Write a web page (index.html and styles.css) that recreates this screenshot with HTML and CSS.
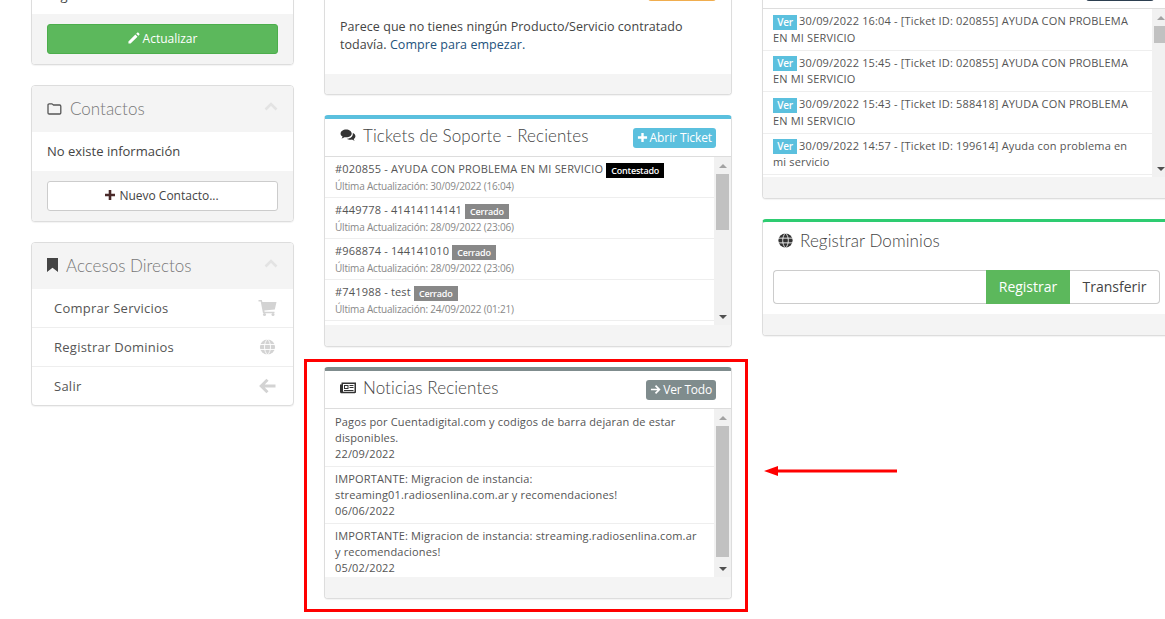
FILE: index.html
```html
<!DOCTYPE html>
<html lang="es">
<head>
	<meta charset="UTF-8">
	<title>Panel de cliente</title>
	<link rel="stylesheet" href="styles.css">
</head>
<body>
	<div class="page">
		<div class="col-left">
			<div class="panel">
				<div class="info-body">Argentina</div>
				<div class="foot foot-btn">
					<a class="btn btn-green">
						<svg class="ico" viewBox="0 0 14 14"><path fill="#fff" d="M3 13.5H0.5V11L8.6 2.9l2.5 2.5zM9.6 1.9l1-1c.5-.5 1.1-.5 1.6 0l.9.9c.5.5.5 1.1 0 1.6l-1 1z"/></svg>
						Actualizar
					</a>
				</div>
			</div>
			<div class="panel">
				<div class="side-head">
					<svg class="ico-title" viewBox="0 0 15 13"><path fill="none" stroke="#555" stroke-width="1.3" d="M1 11V3c0-.8.4-1.2 1.2-1.2h2.6c.7 0 1 .9 1.6 1.2h6.2c.8 0 1.2.4 1.2 1.2V11c0 .7-.4 1-1.2 1H2.2C1.400 12 1 11.700 1 11z"/></svg>
					<span>Contactos</span>
					<svg class="chev" viewBox="0 0 14 9"><path fill="none" stroke="#e3e3e3" stroke-width="2.600" d="M1.500 7.500 7 2l5.500 5.500"/></svg>
				</div>
				<div class="side-text">No existe información</div>
				<div class="foot foot-btn">
					<a class="btn btn-white">
						<svg class="ico" viewBox="0 0 12 12"><path fill="#4a2a2a" d="M4.700 1h2.600v3.700H11v2.600H7.300V11H4.700V7.300H1V4.700h3.700z"/></svg>
						Nuevo Contacto...
					</a>
				</div>
			</div>
			<div class="panel">
				<div class="side-head">
					<svg class="ico-mark" viewBox="0 0 11 14"><path fill="#444" d="M0 0h11v14L5.500 9.800 0 14z"/></svg>
					<span>Accesos Directos</span>
					<svg class="chev" viewBox="0 0 14 9"><path fill="none" stroke="#e3e3e3" stroke-width="2.600" d="M1.500 7.500 7 2l5.500 5.500"/></svg>
				</div>
				<a class="link-row">
					Comprar Servicios
					<svg class="link-ico" viewBox="0 0 18 16"><path fill="#d3d3d3" d="M0 0h3.300l.6 2H18l-1.700 7.400-10.500 1 .3 1.300H16v1.600H4.500L2.200 1.600H0z"/><circle fill="#d3d3d3" cx="6" cy="14.500" r="1.500"/><circle fill="#d3d3d3" cx="14.500" cy="14.500" r="1.500"/></svg>
				</a>
				<a class="link-row">
					Registrar Dominios
					<svg class="link-ico" viewBox="0 0 16 16"><circle fill="#d3d3d3" cx="8" cy="8" r="7.600"/><path fill="none" stroke="#fff" stroke-width=".9" d="M0 5.500h16M0 10.500h16M8 0c-4 4-4 12 0 16M8 0c4 4 4 12 0 16"/></svg>
				</a>
				<a class="link-row">
					Salir
					<svg class="link-ico" viewBox="0 0 16 14"><path fill="none" stroke="#d3d3d3" stroke-width="2.600" d="M15 7H3M8 1.500 2.500 7 8 12.500"/></svg>
				</a>
			</div>
		</div>

		<div class="col-mid">
			<div class="panel panel-line">
				<div class="head head-open">
					<a class="tag tag-orange"></a>
				</div>
				<div class="plain-body">Parece que no tienes ningún Producto/Servicio contratado todavía. <a class="blue">Compre para empezar.</a></div>
				<div class="foot"></div>
			</div>

			<div class="panel panel-blue">
				<div class="head">
					<svg class="ico-title" viewBox="0 0 17 14"><path fill="#333" d="M6.500 0.500c3.300 0 6 1.900 6 4.300S9.800 9 6.500 9c-.7 0-1.300-.1-1.900-.2C3.700 9.500 2.700 10 1.500 10.200c.6-.7 1-1.400 1.200-2.100C1.200 7.300.5 6.100.5 4.800.500 2.400 3.200.5 6.500.5z"/><path fill="#333" d="M13.700 4.200c1.700.7 2.800 2 2.800 3.500 0 1.200-.7 2.300-1.900 3 .2.700.6 1.400 1.200 2-1.100-.2-2.100-.6-3-1.300-.5.1-1 .2-1.600.2-1.500 0-2.900-.5-3.900-1.200 3.500-.1 6.800-2 6.400-6.200z"/></svg>
					<span class="title">Tickets de Soporte - Recientes</span>
					<a class="tag tag-blue">
						<svg class="ico" viewBox="0 0 12 12"><path fill="#fff" d="M4.700 1h2.600v3.700H11v2.600H7.300V11H4.700V7.300H1V4.700h3.700z"/></svg>Abrir Ticket
					</a>
				</div>
				<div class="scroll-box">
					<div class="rows">
						<div class="ticket"><div class="t-name">#020855 - AYUDA CON PROBLEMA EN MI SERVICIO <span class="label label-black">Contestado</span></div><div class="t-date">Última Actualización: 30/09/2022 (16:04)</div></div>
						<div class="ticket"><div class="t-name">#449778 - 41414114141 <span class="label label-grey">Cerrado</span></div><div class="t-date">Última Actualización: 28/09/2022 (23:06)</div></div>
						<div class="ticket"><div class="t-name">#968874 - 144141010 <span class="label label-grey">Cerrado</span></div><div class="t-date">Última Actualización: 28/09/2022 (23:06)</div></div>
						<div class="ticket"><div class="t-name">#741988 - test <span class="label label-grey">Cerrado</span></div><div class="t-date">Última Actualización: 24/09/2022 (01:21)</div></div>
					</div>
					<div class="bar"><i class="up"></i><div class="track"><div class="thumb thumb-tickets"></div></div><i class="down"></i></div>
				</div>
				<div class="foot"></div>
			</div>

			<div class="panel panel-grey">
				<div class="head">
					<svg class="ico-title" viewBox="0 0 16 12"><path fill="#333" d="M1.500 1H16v9.500c0 .8-.5 1.200-1.200 1.200H1.500C.6 11.700 0 11.100 0 10.200V3h1.500z"/><path fill="#fff" d="M3 2.500h11.500v7.700H3z"/><path fill="#333" d="M4 3.500h4.500v4H4zM9.500 3.500h4v1h-4zM9.500 5.500h4v1h-4zM4 8.500h9.500v1H4z"/><path fill="#fff" d="M5 4.500h2.500v2H5z"/></svg>
					<span class="title">Noticias Recientes</span>
					<a class="tag tag-grey">
						<svg class="ico" viewBox="0 0 12 12"><path fill="none" stroke="#fff" stroke-width="1.900" d="M1 6h9M6 1.800 10.200 6 6 10.200"/></svg>Ver Todo
					</a>
				</div>
				<div class="scroll-box">
					<div class="rows">
						<div class="news">Pagos por Cuentadigital.com y codigos de barra dejaran de estar disponibles.<br>22/09/2022</div>
						<div class="news">IMPORTANTE: Migracion de instancia:<br>streaming01.radiosenlina.com.ar y recomendaciones!<br>06/06/2022</div>
						<div class="news">IMPORTANTE: Migracion de instancia: streaming.radiosenlina.com.ar y recomendaciones!<br>05/02/2022</div>
					</div>
					<div class="bar"><i class="up"></i><div class="track"><div class="thumb thumb-news"></div></div><i class="down"></i></div>
				</div>
				<div class="foot"></div>
			</div>
		</div>

		<div class="col-right">
			<div class="panel panel-line">
				<div class="head">
					<a class="tag tag-navy"></a>
				</div>
				<div class="scroll-box">
					<div class="rows">
						<div class="act"><span class="label label-blue">Ver</span> 30/09/2022 16:04 - [Ticket ID: 020855] AYUDA CON PROBLEMA EN MI SERVICIO</div>
						<div class="act"><span class="label label-blue">Ver</span> 30/09/2022 15:45 - [Ticket ID: 020855] AYUDA CON PROBLEMA EN MI SERVICIO</div>
						<div class="act"><span class="label label-blue">Ver</span> 30/09/2022 15:43 - [Ticket ID: 588418] AYUDA CON PROBLEMA EN MI SERVICIO</div>
						<div class="act"><span class="label label-blue">Ver</span> 30/09/2022 14:57 - [Ticket ID: 199614] Ayuda con problema en mi servicio</div>
					</div>
					<div class="bar"><i class="up"></i><div class="track"><div class="thumb thumb-act"></div></div><i class="down"></i></div>
				</div>
				<div class="foot"></div>
			</div>

			<div class="panel panel-green">
				<div class="head head-plain">
					<svg class="ico-title ico-globe" viewBox="0 0 16 16"><circle fill="#333" cx="8" cy="8" r="7.600"/><path fill="none" stroke="#fff" stroke-width=".9" d="M0 5.500h16M0 10.500h16M8 0c-4 4-4 12 0 16M8 0c4 4 4 12 0 16"/></svg>
					<span class="title">Registrar Dominios</span>
				</div>
				<div class="domain">
					<input class="domain-input" type="text">
					<a class="domain-reg">Registrar</a>
					<a class="domain-tr">Transferir</a>
				</div>
				<div class="foot"></div>
			</div>
		</div>
	</div>

	<!-- anotacion en rojo encima de la captura -->
	<div class="red-box"></div>
	<svg class="red-arrow" width="140" height="16" viewBox="0 0 140 16"><path fill="#f00" d="M0 8 14 3v3.500h119v3H14V13z"/></svg>
</body>
</html>
```

FILE: styles.css
```css
*{box-sizing:border-box;}
html,body{margin:0;padding:0;height:619px;overflow:hidden;background:#fff;}
body{font-family:"Open Sans","Liberation Sans",sans-serif;font-size:13px;color:#444;position:relative;}
a{text-decoration:none;}

.page{display:flex;align-items:flex-start;gap:30px;margin:-32px 0 0 31px;width:1134px;}
.col-left{width:263px;flex:none;}
.col-mid,.col-right{width:408px;flex:none;}
.col-right{margin-right:-37px;}

.panel{background:#fff;border:1px solid #ddd;border-radius:4px;box-shadow:0 1px 1px rgba(0,0,0,.05);margin-bottom:20px;overflow:hidden;}
.panel-line{border-top:4px solid #fff;}
.panel-blue{border-top:4px solid #5bc0de;}
.panel-grey{border-top:4px solid #7f8c8d;}
.panel-green{border-top:3px solid #2ecc71;}

.foot{height:21px;background:#f4f4f4;}
.foot-btn{height:auto;padding:10px 15px 10px;}
.plain-body + .foot{height:20px;}

.head{height:38px;display:flex;align-items:center;padding:0 15px 4px;border-bottom:1px solid #ddd;}
.col-right .head{height:37px;}
.head-open{border-bottom:0;}
.col-right .head-plain{border-bottom:0;height:48px;padding:0 10px 12px 15px;}
.title{font-family:Lato,"Open Sans",sans-serif;font-size:17px;color:#444;font-weight:300;letter-spacing:.1px;}
.ico-title{width:16px;height:13px;margin-right:7px;flex:none;}
.ico-globe{height:15px;width:15px;margin-right:7px;}

.tag{margin-left:auto;align-self:flex-start;margin-top:9px;height:20px;border-radius:3px;color:#fff;font-size:12px;display:flex;align-items:center;padding:0 4px 2px;letter-spacing:-.2px;}
.tag .ico{width:11px;height:11px;margin-right:2px;}
.tag-blue{background:#5bc0de;letter-spacing:-.1px;}
.tag-grey{background:#7f8c8d;}
.tag-orange{background:#f0ad4e;width:68px;}
.tag-navy{background:#2c3e50;width:68px;}

.info-body{height:45px;padding:17px 15px 0;font-size:13px;line-height:18px;overflow:hidden;}
.btn{display:flex;justify-content:center;align-items:center;height:30px;padding-bottom:2px;border-radius:3px;font-size:12px;}
.btn .ico{width:12px;height:12px;margin-right:3px;}
.btn-green{background:#5cb85c;border:1px solid #4cae4c;color:#fff;}
.btn-white{background:#fff;border:1px solid #ccc;color:#444;padding-right:2px;}

.side-head{height:46px;background:#f4f4f4;display:flex;align-items:center;padding:0 15px 2px;color:#777;font-family:Lato,"Open Sans",sans-serif;font-size:17px;font-weight:300;}
.side-head .ico-title{margin-right:8px;width:15px;}
.ico-mark{width:11px;height:14px;margin-right:8px;}
.chev{width:14px;height:9px;margin-left:auto;margin-top:-4px;}
.side-text{height:39px;background:#fff;padding:10px 15px 0;font-size:13px;line-height:18px;}

.link-row{display:flex;align-items:center;height:39px;padding:0 16px 0 22px;font-size:13px;letter-spacing:.25px;color:#555;border-bottom:1px solid #eee;}
.link-row:last-child{border-bottom:0;height:38px;}
.link-ico{width:19px;height:16px;margin-left:auto;}

.plain-body{height:64px;padding:8px 15px 0;font-size:12.5px;letter-spacing:.05px;line-height:18px;}
.blue{color:#23527c;}

.scroll-box{display:flex;height:168px;}
.rows{flex:1;min-width:0;overflow:hidden;}
.bar{width:17px;flex:none;background:#f1f1f1;display:flex;flex-direction:column;align-items:center;}
.track{flex:1;width:100%;padding:0 2px;}
.thumb{background:#c1c1c1;width:100%;}
.thumb-tickets{height:56px;}
.thumb-news{height:131px;}
.thumb-act{height:17px;}
.up,.down{display:block;width:0;height:0;flex:none;border-left:4px solid transparent;border-right:4px solid transparent;margin:7px 0 6px;}
.up{border-bottom:4px solid #a3a3a3;}
.down{border-top:4px solid #505050;}

.ticket{height:41px;padding:4px 10px 0;border-bottom:1px solid #eee;}
.t-name{font-size:11px;line-height:16px;color:#555;letter-spacing:.18px;}
.t-date{font-size:10px;line-height:16px;color:#888;letter-spacing:-.2px;}
.label{display:inline-block;color:#fff;font-size:9px;font-weight:600;line-height:15px;padding:0 5px;vertical-align:middle;letter-spacing:-.2px;}
.label-black{background:#000;}
.label-grey{background:#888;}
.label-blue{background:#5bc0de;font-size:10px;width:24px;padding:0;text-align:center;margin-right:-1px;}

.news{height:57.500px;padding:4px 10px 0;font-size:11px;line-height:16px;letter-spacing:.16px;color:#555;border-bottom:1px solid #eee;}
.news:first-child{padding-top:5px;}
.act{height:41.500px;padding:4px 10px 0;font-size:11px;line-height:16px;letter-spacing:.17px;color:#555;border-bottom:1px solid #eee;}

.domain{display:flex;height:44px;padding:0 9px 0 10px;}
.domain-input{flex:1;min-width:0;height:34px;border:1px solid #ccc;border-right:0;border-radius:4px 0 0 4px;background:#fff;}
.domain-reg{width:84px;height:34px;padding-bottom:2px;background:#5cb85c;color:#fff;font-size:14px;display:flex;align-items:center;justify-content:center;}
.domain-tr{width:90px;height:34px;padding-bottom:2px;border:1px solid #ccc;border-left:0;border-radius:0 4px 4px 0;color:#444;font-size:14px;display:flex;align-items:center;justify-content:center;}

.red-box{position:absolute;left:304px;top:359px;width:444px;height:253px;border:3px solid #f00;}
.red-arrow{position:absolute;left:764px;top:463px;}
```
